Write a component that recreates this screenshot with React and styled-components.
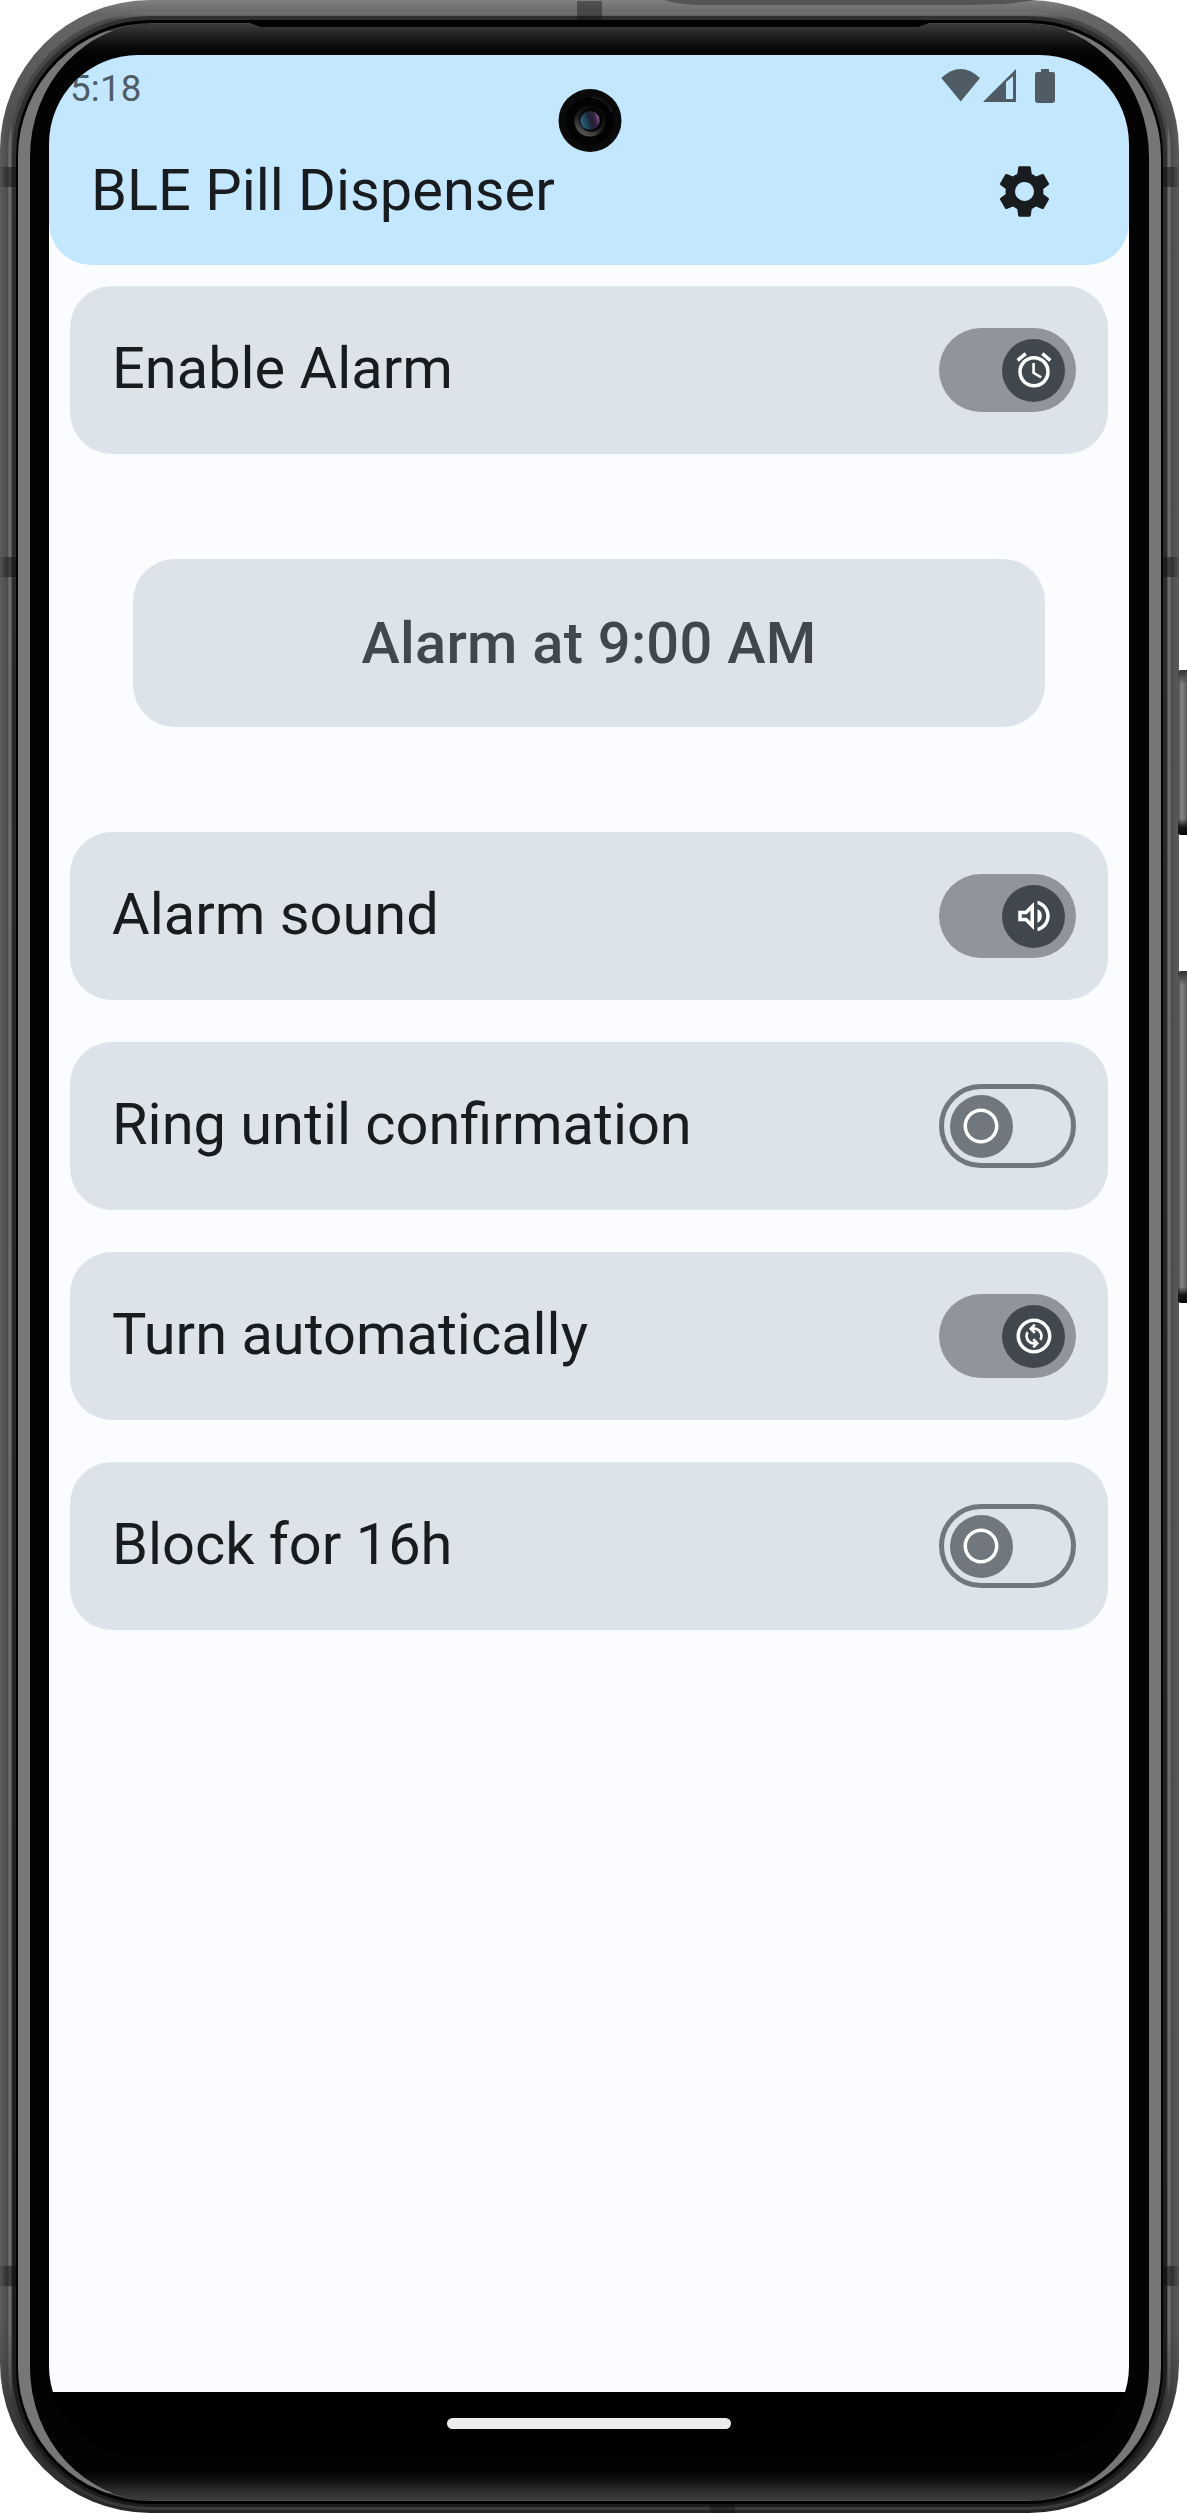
import React from "react";
import styled, { createGlobalStyle, css } from "styled-components";
import {
  MdAlarm,
  MdOutlineChangeCircle,
  MdOutlineVolumeUp,
  MdRadioButtonUnchecked,
  MdSettings,
} from "react-icons/md";

const GlobalStyle = createGlobalStyle`
  *, *::before, *::after { box-sizing: border-box; }
  body { margin: 0; background: #fff; font-family: Roboto, "Noto Sans", sans-serif; }
  svg { display: block; }
`;

/* ---------- device shell ---------- */

const Stage = styled.div`
  width: 1187px;
  height: 2513px;
  overflow: hidden;
  background: #fff;
`;

const Device = styled.div`
  position: relative;
  width: 1179px;
  height: 2513px;
`;

const Rail = styled.div`
  width: 100%;
  height: 100%;
  padding: 12px 8px 3px;
  border-radius: 150px;
  overflow: hidden;
  background:
    linear-gradient(to bottom, #808080 0, #666 14px, rgba(90, 90, 90, 0) 150px),
    linear-gradient(to top, #262626 0, #303030 40px, rgba(60, 60, 60, 0) 190px),
    linear-gradient(to right, #5c5c5c 0, #4a4a4a 8px, #4a4a4a 1171px, #5c5c5c 100%);
`;

const RailHighlight = styled.div`
  height: 100%;
  padding: 4px 4px 3px;
  border-radius: 142px;
  background:
    linear-gradient(to bottom, #767676 0, #484848 8px, rgba(90, 90, 90, 0) 130px),
    linear-gradient(to top, #3c3c3c 0, #2a2a2a 50px, rgba(60, 60, 60, 0) 180px),
    linear-gradient(to right, #5a5a5a 0, #767676 2px, #484848 4px, #484848 1159px, #767676 1161px, #5a5a5a 100%);
`;

const Gasket = styled.div`
  height: 100%;
  padding: 4px 4px 3px;
  border-radius: 138px;
  background: linear-gradient(to bottom, #303030, #262626 60%, #1c1c1c);
`;

const Seal = styled.div`
  height: 100%;
  padding: 3px 2px 3px;
  border-radius: 135px;
  background: #000;
`;

const Glass = styled.div`
  position: relative;
  display: flex;
  flex-direction: column;
  height: 100%;
  padding: 31px 19px 0;
  border-style: solid;
  border-color: #444 #777 #4c4c4c;
  border-width: 1px 12px 1px;
  border-radius: 134px;
  background:
    linear-gradient(to bottom, #3b3b3b 0, #242424 10px, #090909 24px, rgba(3, 3, 3, 0) 32px),
    linear-gradient(to top, #3c3c3c 0, #303030 8px, #121212 19px, rgba(3, 3, 3, 0) 28px),
    #030303;
  background-clip: padding-box;
`;

const Earpiece = styled.div`
  position: absolute;
  top: 22px;
  left: 247px;
  width: 685px;
  height: 5px;
  background: #000;
  clip-path: polygon(0 0, 100% 0, calc(100% - 14px) 100%, 14px 100%);
`;

const TopPlate = styled.div`
  position: absolute;
  top: 0;
  left: 664px;
  width: 372px;
  height: 5px;
  background: #555;
  clip-path: polygon(0 0, 100% 0, 92% 80%, 82% 100%, 8% 100%, 3% 60%);
`;

const Antenna = styled.div`
  position: absolute;
  background: rgba(15, 15, 15, 0.4);
  ${({ $edge, $at }) => {
    if ($edge === "top") return css`top: 1px; left: ${$at}px; width: 25px; height: 20px;`;
    if ($edge === "bottom") return css`bottom: 0; left: ${$at}px; width: 25px; height: 9px;`;
    return css`
      top: ${$at}px;
      ${$edge}: 0;
      width: 16px;
      height: 20px;
      background: linear-gradient(to ${$edge}, rgba(15, 15, 15, 0.5) 50%, rgba(15, 15, 15, 0.1));
    `;
  }}
`;

const SideKey = styled.div`
  position: absolute;
  top: ${({ $top }) => $top}px;
  left: 1178px;
  width: 9px;
  height: ${({ $height }) => $height}px;
  border-radius: 3px 0 0 3px;
  background:
    linear-gradient(to bottom, #333 0, #555 8px, rgba(90, 90, 90, 0) 14px),
    linear-gradient(to top, #080808 0, #161616 8px, rgba(60, 60, 60, 0) 16px),
    linear-gradient(to right, #444 0, #858585 3px, #777 6px, #555 9px);
`;

const Camera = styled.div`
  position: absolute;
  top: 88px;
  left: 557.5px;
  width: 64px;
  height: 64px;
`;

/* ---------- screen ---------- */

const Screen = styled.div`
  isolation: isolate;
  display: flex;
  flex-direction: column;
  width: 1080px;
  height: 2400px;
  border-radius: 89px;
  overflow: hidden;
  background: #000;
  color: #191c1e;
`;

const Header = styled.header`
  position: relative;
  z-index: 1;
  flex: none;
  height: 210px;
  border-radius: 0 0 42px 42px;
  background: #c3e7ff;
`;

const StatusBar = styled.div`
  display: flex;
  align-items: flex-start;
  justify-content: space-between;
  height: 63px;
  padding: 12px 73px 0 21px;
  color: #4f5c65;
`;

const Clock = styled.span`
  font-size: 36.75px;
  line-height: 43px;
  letter-spacing: 0.2px;
`;

const StatusIcons = styled.div`
  display: flex;
  align-items: flex-start;
  padding-top: 1px;
`;

const AppBar = styled.div`
  display: flex;
  align-items: center;
  justify-content: space-between;
  height: 147px;
  padding: 0 73.5px 0 42px;
`;

const Title = styled.h1`
  margin: 0;
  padding-bottom: 4px;
  font-size: 57.75px;
  font-weight: 400;
  line-height: 74px;
`;

const IconButton = styled.button`
  margin: 0;
  padding: 0;
  border: 0;
  background: none;
  color: inherit;
`;

/* Slides under the header so its rounded corners sit on the content surface. */
const Content = styled.main`
  display: flex;
  flex: 1;
  flex-direction: column;
  gap: 42px;
  margin-top: -42px;
  padding: 63px 21px 21px;
  background: #fbfcff;
`;

const Setting = styled.section`
  display: flex;
  align-items: center;
  justify-content: space-between;
  height: 168px;
  padding: 0 32px 0 42px;
  border-radius: 42px;
  background: #dce3e9;
`;

const Label = styled.span`
  padding-bottom: 4px;
  font-size: 57.75px;
  line-height: 74px;
`;

const AlarmTime = styled.button`
  height: 168px;
  margin: 63px;
  padding: 0;
  border: 0;
  border-radius: 42px;
  background: #dce3e9;
  color: #41484d;
  font: 500 57.75px/74px Roboto, "Noto Sans", sans-serif;
  letter-spacing: 0.2625px;
`;

const Track = styled.button`
  display: flex;
  align-items: center;
  justify-content: ${({ $on }) => ($on ? "flex-end" : "flex-start")};
  width: 136.5px;
  height: 84px;
  margin: 0 0.25px 0 0;
  padding: 0 ${({ $on }) => ($on ? 10.5 : 5.5)}px;
  border: ${({ $on }) => ($on ? "0" : "5px solid #71787d")};
  border-radius: 42px;
  background: ${({ $on }) => ($on ? "#90949c" : "transparent")};
`;

const Thumb = styled.span`
  display: flex;
  align-items: center;
  justify-content: center;
  width: 63px;
  height: 63px;
  border-radius: 50%;
  background: ${({ $on }) => ($on ? "#41484d" : "#71787d")};
  color: #fff;
`;

const NavBar = styled.div`
  display: flex;
  flex: none;
  align-items: center;
  justify-content: center;
  height: 63px;
  padding-right: 1px;
  background: #000;
`;

const NavHandle = styled.div`
  width: 284px;
  height: 11px;
  border-radius: 6px;
  background: #ececec;
`;

const settings = [
  { label: "Alarm sound", on: true, icon: MdOutlineVolumeUp },
  { label: "Ring until confirmation", on: false, icon: MdRadioButtonUnchecked },
  { label: "Turn automatically", on: true, icon: MdOutlineChangeCircle },
  { label: "Block for 16h", on: false, icon: MdRadioButtonUnchecked },
];

function SettingRow({ label, on, icon: Icon }) {
  return (
    <Setting>
      <Label>{label}</Label>
      <Track type="button" role="switch" aria-checked={on} aria-label={label} $on={on}>
        <Thumb $on={on}>
          <Icon size={42} />
        </Thumb>
      </Track>
    </Setting>
  );
}

function StatusGlyphs() {
  return (
    <StatusIcons>
      <svg width="115" height="36" viewBox="0 0 115 36" fill="currentColor">
        <path d="M0.3 10Q19.5 -8 39 10L19.7 33.5Z" />
        <path fillRule="evenodd" d="M42 34L75 1V34ZM65 14V31H72V8.2Z" />
        <path d="M100 1H108V4H112Q114 4 114 6V32Q114 35 111 35H97Q94 35 94 32V6Q94 4 96 4H100Z" />
      </svg>
    </StatusIcons>
  );
}

function CameraLens() {
  return (
    <Camera>
      <svg width="64" height="64" viewBox="0 0 64 64">
        <defs>
          <linearGradient id="lens" x1="0" y1="0.6" x2="1" y2="0.3">
            <stop offset="0" stopColor="#2b6a85" />
            <stop offset="0.5" stopColor="#1c2338" />
            <stop offset="0.75" stopColor="#35233f" />
            <stop offset="1" stopColor="#9a6cab" />
          </linearGradient>
          <linearGradient id="rim" x1="0.2" y1="1" x2="0.7" y2="0.1">
            <stop offset="0" stopColor="#626262" />
            <stop offset="0.5" stopColor="#1c1c1c" />
            <stop offset="1" stopColor="#080808" />
          </linearGradient>
        </defs>
        <circle cx="32" cy="32.5" r="31.5" fill="#0a0a0a" />
        <circle cx="32" cy="33" r="24" fill="#030303" />
        <path d="M33 9A24 24 0 0 1 54 24" fill="none" stroke="#2a2a2a" strokeWidth="1" />
        <circle cx="32" cy="33" r="15.5" fill="url(#rim)" />
        <circle cx="33" cy="32" r="11.5" fill="#050505" />
        <circle cx="32" cy="32.5" r="9.6" fill="url(#lens)" />
      </svg>
    </Camera>
  );
}

export default function App() {
  return (
    <Stage>
      <GlobalStyle />
      <Device>
        <Rail>
          <RailHighlight>
            <Gasket>
              <Seal>
                <Glass>
                  <Screen>
                    <Header>
                      <StatusBar>
                        <Clock>5:18</Clock>
                        <StatusGlyphs />
                      </StatusBar>
                      <AppBar>
                        <Title>BLE Pill Dispenser</Title>
                        <IconButton type="button" aria-label="Settings">
                          <MdSettings size={63} />
                        </IconButton>
                      </AppBar>
                    </Header>
                    <Content>
                      <SettingRow label="Enable Alarm" on icon={MdAlarm} />
                      <AlarmTime type="button">Alarm at 9:00 AM</AlarmTime>
                      {settings.map((item) => (
                        <SettingRow key={item.label} {...item} />
                      ))}
                    </Content>
                    <NavBar>
                      <NavHandle />
                    </NavBar>
                  </Screen>
                </Glass>
              </Seal>
            </Gasket>
          </RailHighlight>
        </Rail>
        <Earpiece />
        <TopPlate />
        <Antenna $edge="top" $at={577} />
        <Antenna $edge="bottom" $at={710} />
        {[167, 557, 2266].map((at) => (
          <React.Fragment key={at}>
            <Antenna $edge="left" $at={at} />
            <Antenna $edge="right" $at={at} />
          </React.Fragment>
        ))}
        <SideKey $top={670} $height={165} />
        <SideKey $top={971} $height={332} />
        <CameraLens />
      </Device>
    </Stage>
  );
}
